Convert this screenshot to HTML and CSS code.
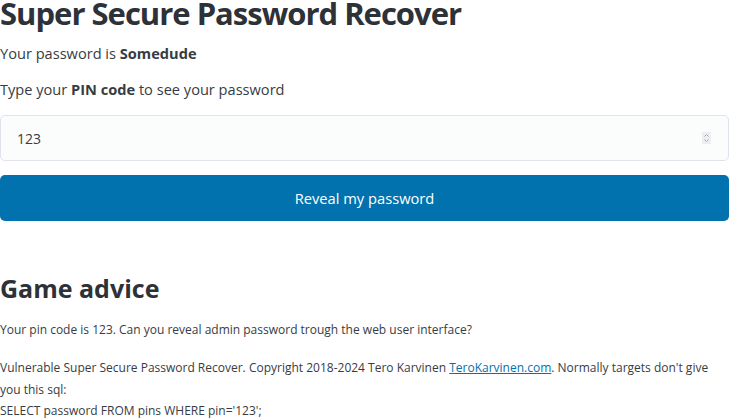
FILE: index.html
```html
<!DOCTYPE html>
<html>
<head>
<meta charset="utf-8">
<link rel="stylesheet" href="styles.css">
</head>
<body>
<main class="page">
  <h1 class="title">Super Secure Password Recover</h1>
  <p class="lead lead-first">Your password is <b>Somedude</b></p>
  <form class="form">
    <label class="lead">Type your <b>PIN code</b> to see your password</label>
    <div class="field">
      <span class="field-value">123</span>
      <span class="spin">
        <svg width="9" height="12" viewBox="0 0 9 12"><path d="M2.5 4.5 L4.5 2.5 L6.5 4.5 M2.5 7.5 L4.5 9.5 L6.5 7.5" fill="none" stroke="#a3a8b0" stroke-width="1"/></svg>
      </span>
    </div>
    <button type="button" class="btn">Reveal my password</button>
  </form>
  <h2 class="subtitle">Game advice</h2>
  <p class="small">Your pin code is 123. Can you reveal admin password trough the web user interface?</p>
  <p class="small small-next">Vulnerable Super Secure Password Recover. Copyright 2018-2024 Tero Karvinen <a href="#" class="link">TeroKarvinen.com</a>. Normally targets don't give you this sql:<br>SELECT password FROM pins WHERE pin='123';</p>
</main>
</body>
</html>
```
FILE: styles.css
```css
* { box-sizing: border-box; }
html, body { margin: 0; padding: 0; background: #fff; }
body {
  font-family: "Open Sans", "Noto Sans", sans-serif;
  color: #373c44;
  overflow: hidden;
  height: 418px;
}
.page {
  margin-top: -5px;
  padding: 0 1px 0 0;
}
.title {
  margin: 0;
  font-size: 31px;
  line-height: 36px;
  letter-spacing: -1px;
  font-weight: 700;
  color: #2d3138;
}
.lead {
  display: block;
  margin: 0;
  font-size: 14.6px;
  line-height: 22px;
}
.lead-first { margin-top: 11px; }
.form { margin-top: 14px; display: flex; flex-direction: column; }
.field {
  margin-top: 15px;
  height: 46px;
  border: 1px solid #dfe3eb;
  border-radius: 5px;
  background: #fbfcfc;
  display: flex;
  align-items: center;
  justify-content: space-between;
  padding: 0 17px 0 16px;
}
.field-value { font-size: 14px; color: #373c44; }
.spin {
  width: 9px; height: 12px; background: #eceef1;
  display: flex; align-items: center; justify-content: center;
}
.btn {
  margin-top: 14px;
  height: 46px;
  border: 0;
  border-radius: 5px;
  background: #0172ad;
  color: #fff;
  font-family: inherit;
  font-size: 14.7px;
  padding: 0;
}
.subtitle {
  margin: 52px 0 0;
  font-size: 25px;
  line-height: 30px;
  font-weight: 700;
  color: #2d3138;
}
.small {
  margin: 16px 0 0;
  font-size: 12px;
  line-height: 21.5px;
}
.small-next { margin-top: 16.5px; }
.link { color: #0172ad; text-decoration: underline; }
```
